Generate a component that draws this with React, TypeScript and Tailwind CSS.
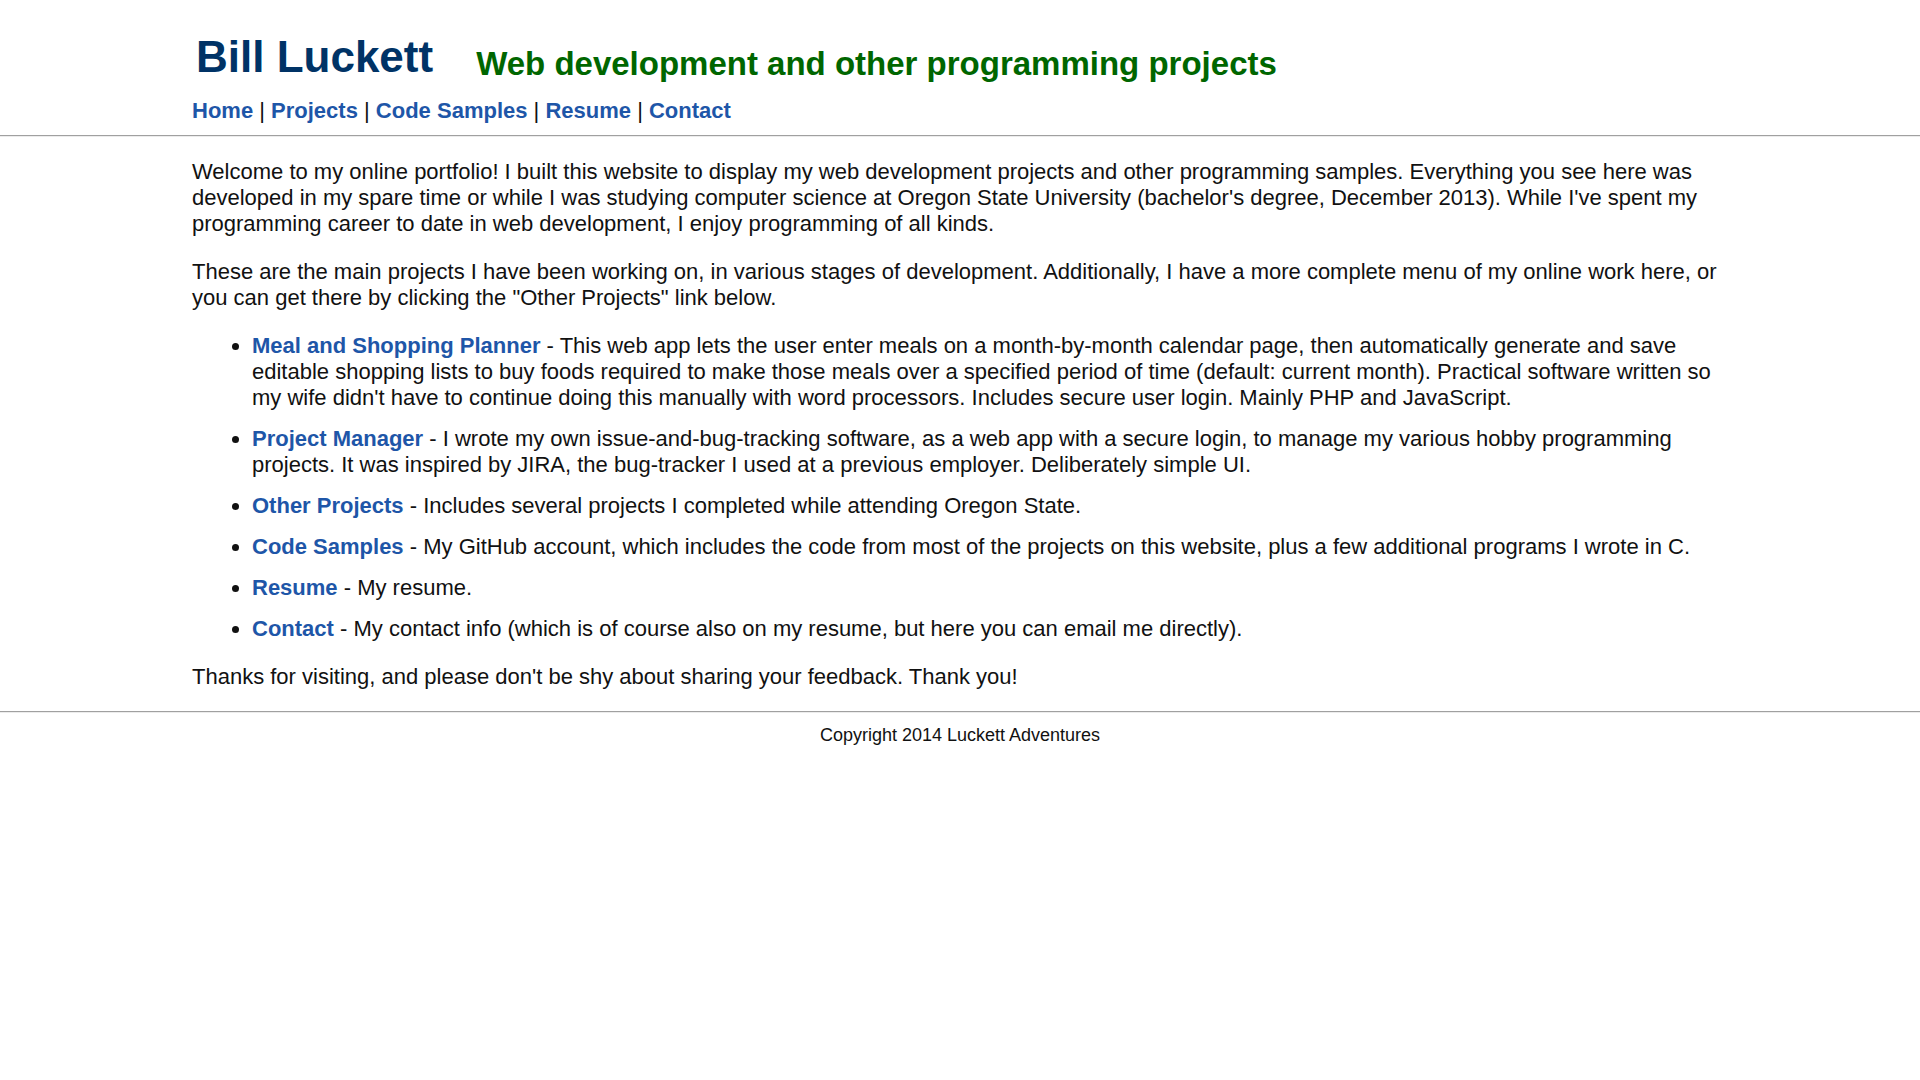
const navLinks = ["Home", "Projects", "Code Samples", "Resume", "Contact"];

const projects = [
  {
    name: "Meal and Shopping Planner",
    text: "This web app lets the user enter meals on a month-by-month calendar page, then automatically generate and save editable shopping lists to buy foods required to make those meals over a specified period of time (default: current month). Practical software written so my wife didn't have to continue doing this manually with word processors. Includes secure user login. Mainly PHP and JavaScript.",
  },
  {
    name: "Project Manager",
    text: "I wrote my own issue-and-bug-tracking software, as a web app with a secure login, to manage my various hobby programming projects. It was inspired by JIRA, the bug-tracker I used at a previous employer. Deliberately simple UI.",
  },
  {
    name: "Other Projects",
    text: "Includes several projects I completed while attending Oregon State.",
  },
  {
    name: "Code Samples",
    text: "My GitHub account, which includes the code from most of the projects on this website, plus a few additional programs I wrote in C.",
  },
  { name: "Resume", text: "My resume." },
  {
    name: "Contact",
    text: "My contact info (which is of course also on my resume, but here you can email me directly).",
  },
];

function Rule() {
  return <div className="h-[2px] w-full border-t border-[#a0a0a0] border-b border-b-[#ececec]" />;
}

export default function App() {
  return (
    <div className="min-h-screen bg-white font-['Liberation_Sans',Arial,sans-serif] leading-[normal] text-[#111]">
      <header className="mx-auto w-[80%] pt-[32px] pb-[11px]">
        <div className="flex items-start">
          <h1 className="ml-[4px] text-[44px] font-bold text-[#003366]">Bill Luckett</h1>
          <h2 className="mt-[13px] ml-[43px] text-[33px] font-bold text-[#006600]">
            Web development and other programming projects
          </h2>
        </div>
        <nav className="mt-[15px] text-[22px]">
          {navLinks.map((l, i) => (
            <span key={l}>
              {i > 0 && <span className="text-[#111]"> | </span>}
              <a href="#" className="font-bold text-[#1e56a8]">
                {l}
              </a>
            </span>
          ))}
        </nav>
      </header>

      <Rule />

      <main className="mx-auto w-[80%] text-[22px]">
        <p className="mt-[22px]">
          Welcome to my online portfolio! I built this website to display my web development projects and other
          programming samples. Everything you see here was developed in my spare time or while I was studying computer
          science at Oregon State University (bachelor's degree, December 2013). While I've spent my programming career
          to date in web development, I enjoy programming of all kinds.
        </p>
        <p className="mt-[22px]">
          These are the main projects I have been working on, in various stages of development. Additionally, I have a
          more complete menu of my online work here, or you can get there by clicking the "Other Projects" link below.
        </p>
        <ul className="mt-[22px] list-disc space-y-[15px] pl-[60px]">
          {projects.map((p) => (
            <li key={p.name}>
              <a href="#" className="font-bold text-[#1e56a8]">
                {p.name}
              </a>{" "}
              - {p.text}
            </li>
          ))}
        </ul>
        <p className="mt-[22px] mb-[21px]">
          Thanks for visiting, and please don't be shy about sharing your feedback. Thank you!
        </p>
      </main>

      <Rule />

      <footer className="pt-[12px] text-center text-[18px]">Copyright 2014 Luckett Adventures</footer>
    </div>
  );
}
